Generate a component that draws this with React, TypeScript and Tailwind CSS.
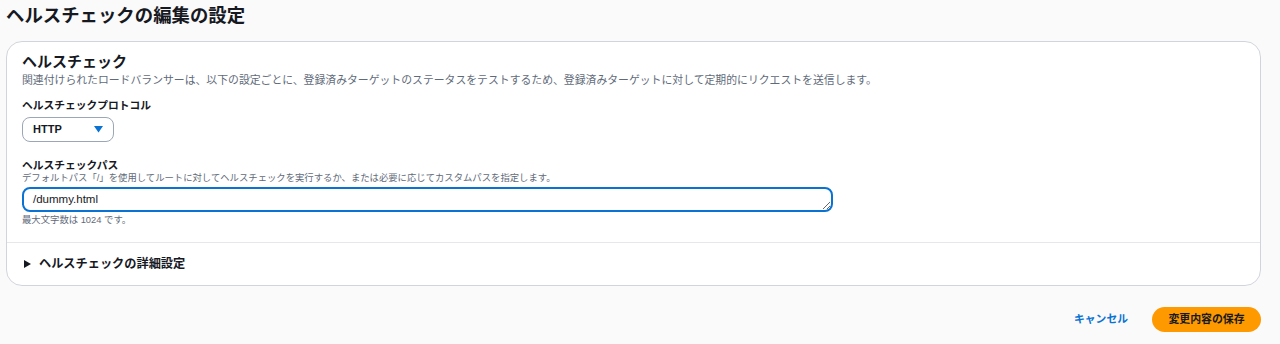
export default function App() {
  return (
    <div
      className="h-[344px] w-[1280px] bg-[#fafafa] px-[6px] text-[#16191f]"
      style={{ fontFamily: '"Liberation Sans", "Noto Sans CJK JP", sans-serif' }}
    >
      <h1 className="pt-[5px] text-[18.4px] font-bold leading-[22px]">ヘルスチェックの編集の設定</h1>

      <div className="mt-[14px] w-[1255px] rounded-[16px] border border-[#d1d5db] bg-white">
        <div className="px-[15px] pt-[10px] pb-[16px]">
          <h2 className="text-[15px] font-bold leading-[20px]">ヘルスチェック</h2>
          <p className="mt-[1px] text-[10.85px] leading-[14px] text-[#5f6b7a]">
            関連付けられたロードバランサーは、以下の設定ごとに、登録済みターゲットのステータスをテストするため、登録済みターゲットに対して定期的にリクエストを送信します。
          </p>

          <div className="mt-[11px] text-[10.75px] font-bold leading-[14px]">ヘルスチェックプロトコル</div>
          <div className="mt-[5px] flex h-[25px] w-[92px] items-center justify-between rounded-[8px] border border-[#9ba7b6] pl-[10px] pr-[10px]">
            <span className="text-[11px] font-bold">HTTP</span>
            <svg width="9" height="7" viewBox="0 0 9 7">
              <path d="M0 0 H9 L4.5 6.5 Z" fill="#0972d3" />
            </svg>
          </div>

          <div className="mt-[16px] text-[10.75px] font-bold leading-[14px]">ヘルスチェックパス</div>
          <p className="text-[9.35px] leading-[12px] text-[#5f6b7a]">
            デフォルトパス「/」を使用してルートに対してヘルスチェックを実行するか、または必要に応じてカスタムパスを指定します。
          </p>
          <textarea
            rows={1}
            defaultValue="/dummy.html"
            className="mt-[3px] block h-[25px] w-[811px] rounded-[8px] border-2 border-[#0972d3] px-[9px] py-[3px] text-[11.5px] leading-[15px] text-[#16191f] outline-none"
          />
          <p className="mt-[2px] text-[9.35px] leading-[12px] text-[#5f6b7a]">最大文字数は 1024 です。</p>
        </div>

        <div className="flex h-[43px] items-center gap-[8px] border-t border-[#e5e7eb] px-[17px]">
          <svg width="7" height="8" viewBox="0 0 7 8">
            <path d="M0 0 L7 4 L0 8 Z" fill="#16191f" />
          </svg>
          <span className="text-[12.2px] font-bold">ヘルスチェックの詳細設定</span>
        </div>
      </div>

      <div className="mt-[21px] flex w-[1255px] items-center justify-end gap-[24px]">
        <button className="text-[10.8px] font-bold text-[#0972d3]">キャンセル</button>
        <button className="h-[25px] w-[109px] rounded-full bg-[#ff9900] text-[10.9px] font-bold text-[#16191f]">
          変更内容の保存
        </button>
      </div>
    </div>
  );
}
